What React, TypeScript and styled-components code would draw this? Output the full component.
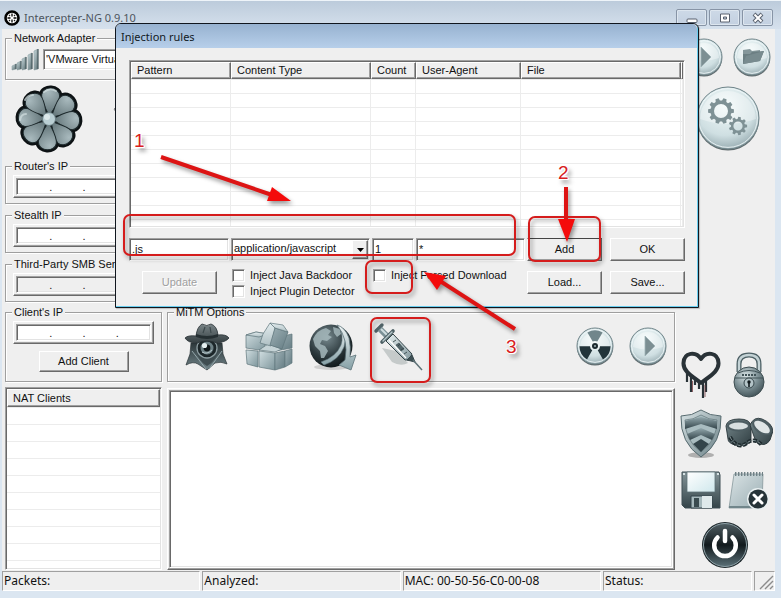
import React from "react";
import styled, { createGlobalStyle, css } from "styled-components";

const face = "#efefef";
const ui = '"Liberation Sans", Arial, sans-serif';
const caption = '"Noto Sans", "Open Sans", sans-serif';

const GlobalStyle = createGlobalStyle`
  *, *::before, *::after { box-sizing: border-box; }
  body { margin: 0; background: #dbe6f1; }
  button, input, select, textarea { font: inherit; color: inherit; margin: 0; border-radius: 0; }
  svg { display: block; }
`;

const sunken = css`
  border: 1px solid;
  border-color: #a0a0a0 #fff #fff #a0a0a0;
  box-shadow: inset 1px 1px 0 #696969, inset -1px -1px 0 #e3e3e3;
`;

const raised = css`
  border: 1px solid;
  border-color: #fff #696969 #696969 #fff;
  box-shadow: inset -1px -1px 0 #a0a0a0;
`;

/* ---------- window frame ---------- */

const Window = styled.div`
  position: relative;
  display: flex;
  flex-direction: column;
  min-height: 100vh;
  padding: 0 6px 7px 2px;
  background: #dbe6f1;
  font: 11px/13px ${ui};
  color: #111;
`;

const TitleBar = styled.header`
  display: flex;
  align-items: center;
  gap: 4px;
  height: 29px;
  margin: 0 -6px 0 -2px;
  padding: 5px 8px 0 4px;
  border-top: 1px solid #eef4f9;
  background: linear-gradient(#bccbdb, #d6e1ed);
`;

const Title = styled.h1`
  flex: 1;
  margin: 0;
  font: 11px/16px ${caption};
  color: #4d555e;
`;

const CaptionButtons = styled.div`
  display: flex;
  gap: 2px;
`;

const CaptionButton = styled.button`
  display: grid;
  place-items: center;
  width: 31px;
  height: 17px;
  padding: 0;
  border: 1px solid #8794a6;
  border-radius: 2px;
  background: linear-gradient(#cdd9e7, #c3d0e0);
  box-shadow: inset 0 0 0 1px #dde6ef;
`;

const Client = styled.main`
  flex: 1;
  display: flex;
  background: ${face};
`;

const Workspace = styled.div`
  flex: 1;
  display: flex;
  flex-direction: column;
  padding: 3px 0 0 3px;
`;

const Group = styled.fieldset`
  min-width: 0;
  margin: 0;
  padding: 3px 7px 5px;
  border: 1px solid #9f9f9f;
  box-shadow: 1px 1px 0 #fff, inset 1px 1px 0 #fff;

  legend {
    margin-left: -1px;
    padding: 0 2px;
    line-height: 12px;
    background: ${face};
  }
`;

const AdapterRow = styled.div`
  display: flex;
  align-items: center;
  gap: 3px;
  height: 27px;
  margin-left: -2px;
  padding-bottom: 2px;
`;

const AdapterField = styled.input`
  ${sunken}
  flex: 1;
  height: 21px;
  padding: 0 2px 1px;
  background: #fff;
`;

const Modes = styled.div`
  display: flex;
  align-items: center;
  gap: 28px;
  height: 80px;
  padding: 0 0 3px 9px;
`;

const Panels = styled.div`
  flex: 1;
  display: grid;
  grid-template-columns: 157px minmax(0, 1fr);
  grid-template-rows: auto auto 1fr;
  column-gap: 5px;
`;

const AddressStack = styled.div`
  grid-column: 1 / -1;
  width: 157px;
  display: flex;
  flex-direction: column;
  gap: 5px;
  margin-bottom: 4px;
`;

const IpFrame = styled.div`
  ${raised}
  width: 141px;
  height: 23px;
  padding: 2px;
`;

const IpInner = styled.div<{ $off?: boolean }>`
  ${sunken}
  display: flex;
  align-items: flex-end;
  height: 100%;
  padding: 0 1px;
  background: ${(p) => (p.$off ? face : "#fff")};

  input {
    flex: 1;
    min-width: 0;
    height: 15px;
    padding: 0;
    border: 0;
    background: transparent;
    text-align: center;
    outline: 0;
  }
  span { width: 2px; }
`;

const PushButton = styled.button<{ $w: number; $h: number; $active?: boolean }>`
  ${raised}
  width: ${(p) => p.$w}px;
  height: ${(p) => p.$h}px;
  padding: 0 0 1px;
  background: ${face};
  ${(p) => p.$active && "border-top-color: #444;"}

  &:disabled { color: #a0a0a0; text-shadow: 1px 1px 0 #fff; }
`;

const Centered = styled.div`
  display: flex;
  justify-content: center;
  padding: 7px 0 4px;
`;

const ToolRow = styled.div`
  display: flex;
  align-items: center;
  height: 52px;
  padding-left: 9px;
  gap: 14px;
`;

const IconButton = styled.button`
  display: block;
  flex: none;
  padding: 0;
  border: 0;
  background: none;
`;

const ToolPair = styled.div`
  display: flex;
  gap: 15px;
  margin-left: auto;
`;

const NatBox = styled.div`
  ${sunken}
  margin-top: 5px;
  padding: 1px;
  background: repeating-linear-gradient(#fff 0 16px, #ececec 16px 17px) 0 3px;
`;

const NatTable = styled.table`
  width: 100%;
  border-collapse: separate;
  border-spacing: 0;

  th {
    ${raised}
    height: 18px;
    padding: 0 5px;
    background: ${face};
    text-align: left;
    font-weight: normal;
  }
`;

const LogFrame = styled.div`
  ${raised}
  display: flex;
  margin-top: 6px;
  padding: 1px;
`;

const Log = styled.textarea`
  ${sunken}
  flex: 1;
  resize: none;
  background: #fff;
  outline: 0;
`;

const Sidebar = styled.aside`
  display: flex;
  flex-direction: column;
  justify-content: space-between;
  width: 100px;
  padding: 9px 0 1px 2px;
`;

const IconGrid = styled.div<{ $gap: number; $indent?: boolean }>`
  display: grid;
  grid-template-columns: 48px 48px;
  justify-items: center;
  align-items: center;
  row-gap: ${(p) => p.$gap}px;
  margin-left: ${(p) => (p.$indent ? 3 : 0)}px;
`;

const WideCell = styled.div`
  grid-column: 1 / -1;
`;

const StatusBar = styled.footer`
  display: flex;
  gap: 2px;
  padding-top: 1px;
  background: ${face};
  font: 12px/18px ${caption};
`;

const StatusCell = styled.div<{ $grow: number }>`
  flex: ${(p) => p.$grow} 1 0;
  height: 20px;
  padding-left: 1px;
  border: 1px solid;
  border-color: #a0a0a0 #fff #fff #a0a0a0;
  white-space: nowrap;
`;

const GripCell = styled(StatusCell)`
  flex: 0 0 21px;
  display: flex;
  align-items: flex-end;
  justify-content: flex-end;
`;

/* ---------- dialog ---------- */

const Dialog = styled.section`
  position: absolute;
  left: 115px;
  top: 23px;
  width: 584px;
  border: 1px solid #10161e;
  border-radius: 6px 6px 0 0;
  background: ${face};
  box-shadow: inset -1px -1px 0 #69cdee, 1px 1px 1px #0003;
`;

const DialogTitle = styled.h2`
  height: 24px;
  margin: 0 1px 0 0;
  padding: 0 5px;
  border-radius: 5px 5px 0 0;
  background: linear-gradient(#97b2d0, #b7cfea);
  font: 11px/25px ${caption};
  color: #111a24;
`;

const DialogBody = styled.div`
  padding: 12px 13px 9px;
`;

const RuleBox = styled.div`
  ${sunken}
  padding: 1px;
  background: #fff;
`;

const RuleTable = styled.table`
  width: 100%;
  table-layout: fixed;
  border-collapse: separate;
  border-spacing: 0;

  th {
    ${raised}
    height: 17px;
    padding: 0 5px;
    background: ${face};
    text-align: left;
    font-weight: normal;
  }
  td {
    height: 14px;
    padding: 0;
    border-right: 1px solid #ececec;
    border-bottom: 1px solid #ececec;
  }
  tbody tr:first-child td { height: 1px; }
  tbody tr:last-child td { height: 6px; border-bottom: 0; }
`;

const EditRow = styled.div`
  display: flex;
  gap: 2px;
  margin-top: 10px;
`;

const Field = styled.input<{ $w?: number }>`
  ${sunken}
  ${(p) => (p.$w ? `width: ${p.$w}px;` : "flex: 1; min-width: 0;")}
  height: 23px;
  padding: 0 2px 2px;
  background: #fff;
  outline: 0;
`;

const SelectWrap = styled.div`
  position: relative;
  width: 139px;
`;

const TypeSelect = styled.select`
  ${sunken}
  width: 100%;
  height: 23px;
  padding: 0 2px 2px;
  appearance: none;
  background: #fff;
`;

const Drop = styled.span`
  ${raised}
  position: absolute;
  right: 2px;
  top: 2px;
  bottom: 2px;
  width: 16px;
  display: grid;
  place-items: center;
  background: ${face};
  pointer-events: none;
`;

const ButtonPair = styled.div`
  display: flex;
  gap: 8px;
`;

const OptionRow = styled.div`
  display: flex;
  align-items: flex-start;
  margin-top: 8px;
`;

const UpdateSlot = styled.div`
  width: 103px;
  padding: 2px 0 0 13px;
`;

const Checks = styled.div<{ $w?: number }>`
  ${(p) => (p.$w ? `width: ${p.$w}px;` : "flex: 1;")}
  display: flex;
  flex-direction: column;
  gap: 3px;
`;

const CheckLabel = styled.label`
  display: flex;
  align-items: center;
  gap: 5px;
  height: 13px;
  white-space: nowrap;

  input {
    ${sunken}
    appearance: none;
    width: 13px;
    height: 13px;
    background: #fff;
  }
`;

const OptionButtons = styled(ButtonPair)`
  padding-top: 2px;
`;

/* ---------- tutorial marks ---------- */

const Marks = styled.svg`
  position: absolute;
  left: 0;
  top: 0;
  pointer-events: none;
  filter: drop-shadow(2px 3px 2px #0006);
`;

const StepNumber = styled.span<{ $x: number; $y: number }>`
  position: absolute;
  left: ${(p) => p.$x}px;
  top: ${(p) => p.$y}px;
  font: 19px/20px ${ui};
  color: #d8201c;
  text-shadow: 1px 0 #fff, -1px 0 #fff, 0 1px #fff, 0 -1px #fff, 1px 1px #fff, -1px -1px #fff,
    3px 4px 4px #0008;
`;

/* ---------- icons ---------- */

const Grad = ({ id, a, b, c, diag }: { id: string; a: string; b: string; c?: string; diag?: boolean }) => (
  <linearGradient id={id} x1="0" y1="0" x2={diag ? "1" : "0"} y2="1">
    <stop offset="0" stopColor={a} />
    {c && <stop offset=".5" stopColor={c} />}
    <stop offset="1" stopColor={b} />
  </linearGradient>
);

const AppIcon = () => (
  <svg width="16" height="16" viewBox="0 0 16 16">
    <circle cx="8" cy="8" r="6.5" fill="#fff" stroke="#000" strokeWidth="2.6" />
    <path d="M8 3.500v3M8 9.500v3M3.500 8h3M9.500 8h3" stroke="#000" strokeWidth="1.300" />
    <path d="M5 5l1 1M11 5l-1 1M5 11l1-1M11 11l-1-1" stroke="#222" strokeWidth="1.200" />
  </svg>
);

const Signal = () => (
  <svg width="29" height="22" viewBox="0 0 29 22">
    <defs><Grad id="sig" a="#cfdfe2" b="#55696d" diag /></defs>
    {[[0, 5], [5, 8], [10, 12], [16, 16], [22, 20]].map(([x, h]) => (
      <React.Fragment key={x}>
        <path d={`M${x + 1} ${22 - h}l4-2v${h}l-4 1z`} fill="url(#sig)" stroke="#7b9095" strokeWidth=".5" />
        <path d={`M${x + 5} ${20 - h}v${h}`} stroke="#3f5155" strokeWidth="1" />
      </React.Fragment>
    ))}
  </svg>
);

const petals = [4, 49, 94, 139, 184, 229, 274, 319];
const petalPath = "M0-3C-3-9-9.500-17-9-24C-8-33 8-33 9-24C9.500-17 3-9 0-3Z";

const Flower = () => (
  <svg width="70" height="72" viewBox="-35 -36 70 72">
    <defs>
      <radialGradient id="petal" gradientUnits="userSpaceOnUse" cx="-3" cy="-27" r="26">
        <stop offset="0" stopColor="#a9babe" />
        <stop offset="1" stopColor="#56686c" />
      </radialGradient>
    </defs>
    <g stroke="#0d1214" strokeWidth="5.5" strokeLinejoin="round">
      {petals.map((r) => <path key={r} transform={`rotate(${r})`} d={petalPath} />)}
    </g>
    <g fill="url(#petal)" stroke="#1c282b" strokeWidth="1">
      {petals.map((r) => <path key={r} transform={`rotate(${r})`} d={petalPath} />)}
    </g>
    <path d="M-5-27q6-5 12-1M-24-19q3-5 8-5M-29 1q1-6 6-6" fill="none" stroke="#d3dfe1" strokeWidth="2" opacity=".7" strokeLinecap="round" />
    <circle r="6.5" fill="#b9ced3" stroke="#6b7f84" />
    <circle cx="-2" cy="-2" r="3" fill="#dbe8ea" />
  </svg>
);

const Radar = () => (
  <svg width="40" height="60" viewBox="0 0 40 60">
    <path d="M4 14l4-6 4 4-5 6zM4 18l6 6-3 4-5-8z" fill="#a9a9a9" stroke="#777" strokeWidth=".8" />
    <circle cx="22" cy="24" r="14" fill="#b5bcbe" />
  </svg>
);

const Orb = ({ r, id, children }: { r: number; id: string; children: React.ReactNode }) => (
  <svg width={r * 2 + 2} height={r * 2 + 4} viewBox={`${-r - 1} ${-r - 1} ${r * 2 + 2} ${r * 2 + 4}`}>
    <defs>
      <radialGradient id={id} cx=".45" cy=".3" r=".8">
        <stop offset="0" stopColor="#f2fafa" />
        <stop offset=".6" stopColor="#cfdfe2" />
        <stop offset="1" stopColor="#83999f" />
      </radialGradient>
    </defs>
    <circle cy="1.6" r={r} fill="#2f3d41" opacity=".75" />
    <circle r={r} fill={`url(#${id})`} stroke="#6f8489" strokeWidth="1" />
    <path d={`M${-r + 3} 1A${r - 3} ${r - 3} 0 0 1 ${r - 3} 1Q0 ${r * 0.35} ${-r + 3} 1Z`} fill="#fff" opacity=".35" />
    <circle r={r - 1.6} fill="none" stroke="#f3fafb" strokeWidth="1" opacity=".8" />
    {children}
  </svg>
);

const gear = (teeth: number, outer: number, inner: number) => {
  let d = "";
  for (let i = 0; i < teeth; i++) {
    [[-0.34, inner], [-0.2, outer], [0.2, outer], [0.34, inner]].forEach(([o, rad], k) => {
      const a = ((i + o) / teeth) * Math.PI * 2;
      d += `${i === 0 && k === 0 ? "M" : "L"}${(Math.cos(a) * rad).toFixed(2)} ${(Math.sin(a) * rad).toFixed(2)}`;
    });
  }
  return d + "Z";
};

const PlayOrb = ({ id }: { id: string }) => (
  <Orb r={18} id={id}><path d="M-3-10L7 0L-3 10Z" fill="#7c8f93" stroke="#9fb2b6" strokeWidth=".8" /></Orb>
);

const FolderOrb = () => (
  <Orb r={18} id="orbFolder">
    <path d="M-9-7l7-1 2 2 8-1v4H-9z" fill="#85979b" />
    <path d="M-9 7V-3L-2-3L0-5L12-6L8 4Z" fill="#6c7f83" />
    <path d="M-9 7L-6-1L12-6L8 4Z" fill="#788b8f" />
  </Orb>
);

const GearOrb = () => (
  <Orb r={31} id="orbGear">
    <g fill="#7e9195" fillRule="evenodd">
      <path transform="translate(-7 -7)" d={gear(10, 13, 10.5) + "M7 0A7 7 0 1 0-7 0A7 7 0 1 0 7 0Z"} />
      <path transform="translate(10 8)" d={gear(9, 9.2, 7) + "M4.6 0A4.6 4.6 0 1 0-4.6 0A4.6 4.6 0 1 0 4.6 0Z"} />
    </g>
  </Orb>
);

const Nuke = () => (
  <Orb r={18} id="orbNuke">
    {[0, 120, 240].map((r) => (
      <path key={r} transform={`rotate(${r})`} d="M-2.3-4.5L-7.6-13.6A15.6 15.6 0 0 1 7.6-13.6L2.3-4.5A5 5 0 0 0-2.3-4.5Z" fill={r ? "#22343a" : "#71868b"} />
    ))}
    <circle r="3" fill="#1c2a2f" />
    <circle r="1" fill="#9fb2b6" />
  </Orb>
);

const Spy = () => (
  <svg width="46" height="48" viewBox="0 0 46 48">
    <defs><Grad id="hat" a="#7a8588" b="#353f42" /><Grad id="coat" a="#2c373a" b="#72858a" /></defs>
    <path d="M7 20L6 31L2 42Q9 38 14 41L23 47L31 40Q37 38 43 41L39 31L38 20Z" fill="url(#coat)" stroke="#2b3538" strokeWidth=".7" />
    <path d="M8 28L22 46M38 28L25 46" stroke="#93a6aa" strokeWidth="1" />
    <path d="M12 26Q14 38 23 43Q32 38 35 26Z" fill="#3f4d51" />
    <circle cx="23" cy="25" r="10" fill="#1c2629" stroke="#8d9da1" strokeWidth="1.3" />
    <circle cx="23" cy="25" r="6.5" fill="#6d8085" />
    <circle cx="23" cy="25" r="3.4" fill="#0f1719" />
    <circle cx="20.5" cy="22.5" r="2.6" fill="#e5eff0" />
    <path d="M18 29q5 3 10-2" stroke="#b9c8cb" fill="none" />
    <path d="M1 15Q4 12 12 13Q13 4 18 1Q23 4 27 1Q33 3 34 12Q42 11 45 15Q42 19 33 20Q23 16 13 20Q4 20 1 15Z" fill="url(#hat)" stroke="#273033" strokeWidth=".8" />
    <path d="M12 11Q23 15 34 11V14Q23 18 12 14Z" fill="#252f32" />
    <path d="M21 4l-2 6M26 4l1 6" stroke="#3c484b" strokeWidth="1.200" />
  </svg>
);

const Cubes = () => (
  <svg width="50" height="50" viewBox="0 0 50 50">
    <defs><Grad id="cubeL" a="#d1dee1" b="#7d959b" diag /><Grad id="cubeT" a="#e4edef" b="#aebfc3" /><Grad id="cubeD" a="#9fb1b6" b="#637b82" diag /></defs>
    <g stroke="#5f757b" strokeWidth=".7" strokeLinejoin="round">
      <path d="M2 28L14 29V45L3 42Z" fill="url(#cubeL)" />
      <path d="M15 29L31 31V48L15 45Z" fill="url(#cubeL)" />
      <path d="M31 31L41 29V45L31 48Z" fill="url(#cubeD)" />
      <path d="M41 29L48 27V41L41 45Z" fill="url(#cubeD)" />
      <path d="M2 13L12 10L24 12L20 26L15 28L2 26Z" fill="url(#cubeL)" />
      <path d="M2 13L12 10L24 12L15 15Z" fill="url(#cubeT)" />
      <path d="M31 16L48 12V26L31 29Z" fill="url(#cubeD)" />
      <path d="M15 28L24 22L38 27L31 30Z" fill="#c5d3d6" />
      <path d="M19 12L26 1L31 6L27 24L16 21Z" fill="url(#cubeT)" />
      <path d="M31 6L44 10L38 27L26 23Z" fill="url(#cubeD)" />
      <path d="M26 1L39 3L44 10L31 6Z" fill="url(#cubeT)" />
    </g>
  </svg>
);

const Globe = () => (
  <svg width="50" height="50" viewBox="0 0 50 50">
    <defs>
      <radialGradient id="globe" cx=".4" cy=".3" r=".75"><stop offset="0" stopColor="#77898e" /><stop offset=".6" stopColor="#2b383c" /><stop offset="1" stopColor="#0e1517" /></radialGradient>
      <Grad id="band" a="#edf4f5" b="#86a0a6" />
    </defs>
    <ellipse cx="24" cy="45" rx="18" ry="3" fill="#0002" />
    <circle cx="23" cy="24" r="21.5" fill="url(#globe)" />
    <path d="M5 17Q9 8 18 6L23 9L20 13L24 15L19 19L14 18L12 22L17 24L20 29L16 36L13 36L12 29L7 24ZM25 5L32 7L33 12L29 15L26 11Z" fill="#a5b7bb" opacity=".85" />
    <path d="M16 43Q31 38 36 25Q39 14 34 6L31 5Q36 14 33 23Q28 35 13 40Z" fill="url(#band)" stroke="#5e747a" strokeWidth=".6" />
    <path d="M29 3Q37 5 41 16Q43 25 42 35L48 33L43 48L31 43L37 38Q39 27 37 19Q35 10 29 3Z" fill="url(#band)" stroke="#5e747a" strokeWidth=".8" />
  </svg>
);

const Syringe = () => (
  <svg width="52" height="52" viewBox="0 0 52 52">
    <defs><Grad id="glass" a="#e8f1f2" b="#84999f" diag /></defs>
    <path d="M10 27L20 41Q29 46 36 42L24 30Z" fill="#a9b0b1" opacity=".6" />
    <g stroke="#354549" strokeLinejoin="round">
      <path d="M4 10L10 4" stroke="#52656a" strokeWidth="3.4" strokeLinecap="round" />
      <path d="M8 8L16 16" stroke="#7b9096" strokeWidth="6" />
      <path d="M9 8L16 15" stroke="#d0dde0" strokeWidth="2" />
      <path d="M10 21L21 10" stroke="#4b5e63" strokeWidth="3.6" strokeLinecap="round" />
      <path d="M11 20L20 11" stroke="#b7c8cc" strokeWidth="1.4" strokeLinecap="round" />
      <path d="M14 20L21 13L40 33L37 39L33 39Z" fill="url(#glass)" strokeWidth="1" />
      <path d="M24 24L27 22L32 28L29 30Z" fill="#516469" strokeWidth=".6" />
      <path d="M17 19L34 37" stroke="#fff" strokeWidth="1.3" />
      <path d="M24 19l-3 2M28 23l-2 2M32 27l-3 2M35 31l-3 2" strokeWidth=".9" />
      <path d="M35 39L40 34L43 41Z" fill="#3e5055" />
      <path d="M41 39L50 49" stroke="#5e7277" strokeWidth="1.5" />
    </g>
  </svg>
);

const Heart = () => (
  <svg width="40" height="48" viewBox="0 0 40 48">
    <path d="M20 8C15 0 3 1 2.500 12C2 20 11 25 20 32C29 25 38 20 37.500 12C37 1 25 0 20 8Z" fill="none" stroke="#293237" strokeWidth="4" strokeLinejoin="round" />
    <path d="M6 21v10M10 23v18M14 27v7M18 30v8M22 31v16M25 28v13" stroke="#293237" strokeWidth="2.200" />
    <path d="M11.500 30v11M24 34v12" stroke="#7a4045" strokeWidth=".8" />
  </svg>
);

const Padlock = () => (
  <svg width="34" height="46" viewBox="0 0 34 46">
    <defs><radialGradient id="lock" cx=".4" cy=".3" r=".8"><stop offset="0" stopColor="#d9e4e6" /><stop offset=".5" stopColor="#7d9095" /><stop offset="1" stopColor="#35454a" /></radialGradient></defs>
    <path d="M7 20V12Q7 3 17 3Q27 3 27 12V20" fill="none" stroke="#4d6065" strokeWidth="5" />
    <path d="M7 20V12Q7 3 17 3Q27 3 27 12V20" fill="none" stroke="#c3d2d5" strokeWidth="2.400" />
    <circle cx="17" cy="30" r="15" fill="url(#lock)" stroke="#3d4d51" />
    <path d="M3 26H31M6 21Q17 16 28 21" stroke="#415257" strokeWidth="1" fill="none" />
    <path d="M10 23h14" stroke="#425459" strokeWidth="2" strokeDasharray="2 1" />
    <circle cx="17" cy="31" r="5" fill="#b4c4c8" stroke="#35454a" />
    <circle cx="17" cy="30" r="1.700" fill="#111a1d" /><path d="M17 30v5" stroke="#111a1d" strokeWidth="1.600" />
  </svg>
);

const Shield = () => (
  <svg width="42" height="50" viewBox="0 0 42 50">
    <defs><Grad id="rim" a="#d8e3e5" b="#6b8187" diag /><Grad id="inner" a="#93a8ad" b="#33444a" /></defs>
    <ellipse cx="21" cy="46" rx="13" ry="3" fill="#0004" />
    <path d="M21 1Q30 7 41 7Q42 34 21 48Q0 34 1 7Q12 7 21 1Z" fill="url(#rim)" stroke="#566a6f" />
    <path d="M21 6Q29 11 37 11Q37 32 21 43Q5 32 5 11Q13 11 21 6Z" fill="#a9bcc0" stroke="#607479" strokeWidth=".7" />
    <path d="M5 12L21 8L37 12V20L21 15L5 20Z" fill="url(#inner)" />
    <path d="M7 25L21 19L35 25L32 31L21 26L10 31Z" fill="url(#inner)" />
    <path d="M13 35L21 30L29 35L21 43Z" fill="#33444a" />
  </svg>
);

const Cuffs = () => (
  <svg width="48" height="34" viewBox="0 0 48 34">
    <defs><Grad id="cuff" a="#75878b" b="#303e42" diag /></defs>
    <g stroke="#28353a" strokeWidth=".9">
      <path d="M1 9Q2 2 14 2Q25 2 26 9V24Q20 31 10 28Q3 26 3 22Z" fill="url(#cuff)" />
      <ellipse cx="13.500" cy="9" rx="10.500" ry="4.500" fill="#d8dfe0" stroke="#4d5d62" strokeWidth="2" />
      <path d="M25 8Q29-1 37 2Q47 6 48 14L45 23Q40 31 31 25Z" fill="url(#cuff)" />
      <ellipse cx="37" cy="10" rx="10" ry="5.600" transform="rotate(35 37 10)" fill="#dfe5e6" stroke="#4d5d62" strokeWidth="2" />
    </g>
    <path d="M5 20Q12 33 22 26Q29 20 37 28" fill="none" stroke="#1f2b2f" strokeWidth="4" strokeDasharray="4 1.500" />
    <path d="M5 20Q12 33 22 26Q29 20 37 28" fill="none" stroke="#8e9ea2" strokeWidth="1" strokeDasharray="3 2.500" />
  </svg>
);

const Floppy = () => (
  <svg width="40" height="38" viewBox="0 0 40 38">
    <defs><Grad id="disk" a="#849498" b="#344449" /><Grad id="paper" a="#ffffff" b="#cfe7ec" diag /></defs>
    <path d="M1 1H38L39 4V37H4L1 34Z" fill="url(#disk)" stroke="#3f4f54" />
    <path d="M6 1H34V21H6Z" fill="url(#paper)" stroke="#5e7176" strokeWidth=".8" />
    <path d="M10 25H31V37H10Z" fill="#a6b8bc" stroke="#33434a" />
    <path d="M21 25H31V37H21Z" fill="#dfe9eb" />
    <path d="M13 27H18V36H13Z" fill="#3a4b50" />
    <path d="M2 3h2M36 3h2" stroke="#d7e2e4" strokeWidth="2" />
  </svg>
);

const Notepad = () => (
  <svg width="42" height="42" viewBox="0 0 42 42">
    <defs><Grad id="note" a="#dae3e5" b="#9aaeb3" diag /></defs>
    <path d="M6 5H35L34 39H1Z" fill="url(#note)" stroke="#87989c" strokeWidth=".8" />
    <path d="M1 37L34 37V39H1Z" fill="#71868b" />
    <path d="M7 5H35" stroke="#6f8085" strokeWidth="4" strokeDasharray="1.400 1.600" />
    <circle cx="30" cy="30" r="11" fill="#e9f0f1" />
    <circle cx="30" cy="30" r="9.600" fill="#263338" />
    <path d="M26 26l8 8M34 26l-8 8" stroke="#fff" strokeWidth="3" strokeLinecap="round" />
  </svg>
);

const Power = () => (
  <svg width="48" height="48" viewBox="-24 -24 48 48">
    <defs><Grad id="pow" a="#4f5d62" c="#121a1d" b="#5a6f76" /></defs>
    <circle r="23" fill="#1d272b" />
    <circle r="21.500" fill="url(#pow)" stroke="#8fa2a8" strokeWidth="1" />
    <path d="M-7.500-7.500A10.800 10.800 0 1 0 7.500-7.500" fill="none" stroke="#fff" strokeWidth="4.500" strokeLinecap="round" />
    <path d="M0-14V-4" stroke="#fff" strokeWidth="4.500" strokeLinecap="round" />
  </svg>
);

const Grip = () => (
  <svg width="15" height="15" viewBox="0 0 15 15">
    <path d="M1 14L14 1M6 14L14 6M11 14L14 11" stroke="#8b8b8b" strokeWidth="1.400" />
  </svg>
);

/* ---------- composed parts ---------- */

function IpField({ label, off }: { label: string; off?: boolean }) {
  return (
    <IpFrame role="group" aria-label={label}>
      <IpInner $off={off}>
        {[1, 2, 3, 4].map((n) => (
          <React.Fragment key={n}>
            {n > 1 && <span>.</span>}
            <input aria-label={`${label}, part ${n}`} maxLength={3} disabled={off} />
          </React.Fragment>
        ))}
      </IpInner>
    </IpFrame>
  );
}

function Tool({ name, children }: { name: string; children: React.ReactNode }) {
  return <IconButton type="button" aria-label={name}>{children}</IconButton>;
}

function InjectionDialog() {
  return (
    <Dialog role="dialog" aria-labelledby="rules-title">
      <DialogTitle id="rules-title">Injection rules</DialogTitle>
      <DialogBody>
        <RuleBox>
          <RuleTable>
            <colgroup>
              <col width="100" /><col width="140" /><col width="45" /><col width="105" /><col width="160" /><col />
            </colgroup>
            <thead>
              <tr><th>Pattern</th><th>Content Type</th><th>Count</th><th>User-Agent</th><th>File</th><th /></tr>
            </thead>
            <tbody>
              {Array.from({ length: 12 }, (_, i) => (
                <tr key={i}><td /><td /><td /><td /><td /><td /></tr>
              ))}
            </tbody>
          </RuleTable>
        </RuleBox>
        <EditRow>
          <Field $w={100} aria-label="Pattern" defaultValue=".js" />
          <SelectWrap>
            <TypeSelect aria-label="Content Type" defaultValue="application/javascript">
              <option>application/javascript</option>
            </TypeSelect>
            <Drop><svg width="7" height="4" viewBox="0 0 7 4"><path d="M0 0h7L3.500 4z" /></svg></Drop>
          </SelectWrap>
          <Field $w={42} aria-label="Count" defaultValue="1" />
          <Field aria-label="User-Agent" defaultValue="*" />
          <ButtonPair>
            <PushButton type="button" $w={75} $h={23} $active>Add</PushButton>
            <PushButton type="button" $w={75} $h={23}>OK</PushButton>
          </ButtonPair>
        </EditRow>
        <OptionRow>
          <UpdateSlot><PushButton type="button" $w={75} $h={23} disabled>Update</PushButton></UpdateSlot>
          <Checks $w={141}>
            <CheckLabel><input type="checkbox" />Inject Java Backdoor</CheckLabel>
            <CheckLabel><input type="checkbox" />Inject Plugin Detector</CheckLabel>
          </Checks>
          <Checks>
            <CheckLabel><input type="checkbox" />Inject Forced Download</CheckLabel>
          </Checks>
          <OptionButtons>
            <PushButton type="button" $w={75} $h={23}>Load...</PushButton>
            <PushButton type="button" $w={75} $h={23}>Save...</PushButton>
          </OptionButtons>
        </OptionRow>
      </DialogBody>
    </Dialog>
  );
}

function StepMarks() {
  return (
    <>
      <Marks width="700" height="400" viewBox="0 0 700 400" aria-hidden="true">
        <g fill="none" stroke="#d51c1c" strokeWidth="2">
          <rect x="124" y="215" width="391" height="40" rx="6" />
          <rect x="529" y="217" width="71" height="44" rx="6" />
          <rect x="366" y="261" width="46" height="32" rx="6" />
          <rect x="371" y="318" width="59" height="64" rx="6" />
        </g>
        <g stroke="#dd1414" strokeWidth="4" fill="none">
          <path d="M161 157L272 195M566 187V222M515 329L440 281" />
        </g>
        <g fill="#f40b0b">
          <path d="M291 201L267 201L272 187Z" />
          <path d="M567 242L558 219H575Z" />
          <path d="M424 272L446 276L437 290Z" />
        </g>
      </Marks>
      <StepNumber $x={134} $y={131}>1</StepNumber>
      <StepNumber $x={558} $y={163}>2</StepNumber>
      <StepNumber $x={506} $y={337}>3</StepNumber>
    </>
  );
}

export default function App() {
  return (
    <Window>
      <GlobalStyle />
      <TitleBar>
        <AppIcon />
        <Title>Intercepter-NG 0.9.10</Title>
        <CaptionButtons>
          <CaptionButton type="button" aria-label="Minimize">
            <svg width="12" height="12" viewBox="0 0 12 12"><rect x="1" y="7" width="10" height="3.500" rx="1" fill="#fff" stroke="#59616e" /></svg>
          </CaptionButton>
          <CaptionButton type="button" aria-label="Maximize">
            <svg width="12" height="12" viewBox="0 0 12 12"><path d="M1.500 2h9v8h-9z" fill="#fff" stroke="#59616e" /><path d="M4.500 5h3v2h-3z" fill="#c6d2e1" stroke="#59616e" /></svg>
          </CaptionButton>
          <CaptionButton type="button" aria-label="Close">
            <svg width="12" height="12" viewBox="0 0 12 12"><path d="M2 2l8 8M10 2l-8 8" stroke="#59616e" strokeWidth="4" /><path d="M2.500 2.500l7 7M9.500 2.500l-7 7" stroke="#fff" strokeWidth="2" /></svg>
          </CaptionButton>
        </CaptionButtons>
      </TitleBar>

      <Client>
        <Workspace>
          <Group>
            <legend>Network Adapter</legend>
            <AdapterRow>
              <Signal />
              <AdapterField aria-label="Network Adapter" defaultValue="'VMware Virtual" />
            </AdapterRow>
          </Group>
          <Modes>
            <Tool name="Chat resurrection"><Flower /></Tool>
            <Tool name="Scan"><Radar /></Tool>
          </Modes>
          <Panels>
            <AddressStack>
              <Group><legend>Router's IP</legend><IpField label="Router's IP" /></Group>
              <Group><legend>Stealth IP</legend><IpField label="Stealth IP" /></Group>
              <Group><legend>Third-Party SMB Server</legend><IpField label="Third-Party SMB Server" off /></Group>
            </AddressStack>
            <Group>
              <legend>Client's IP</legend>
              <IpField label="Client's IP" />
              <Centered><PushButton type="button" $w={90} $h={21}>Add Client</PushButton></Centered>
            </Group>
            <Group>
              <legend>MiTM Options</legend>
              <ToolRow>
                <Tool name="Traffic watcher"><Spy /></Tool>
                <Tool name="Defragment"><Cubes /></Tool>
                <Tool name="Traffic changer"><Globe /></Tool>
                <Tool name="Injection"><Syringe /></Tool>
                <ToolPair>
                  <Tool name="ARP poison"><Nuke /></Tool>
                  <Tool name="Start MiTM"><PlayOrb id="orbPlay2" /></Tool>
                </ToolPair>
              </ToolRow>
            </Group>
            <NatBox>
              <NatTable><thead><tr><th>NAT Clients</th></tr></thead></NatTable>
            </NatBox>
            <LogFrame><Log aria-label="Log" readOnly /></LogFrame>
          </Panels>
        </Workspace>

        <Sidebar>
          <IconGrid $gap={8} $indent>
            <Tool name="Start sniffing"><PlayOrb id="orbPlay1" /></Tool>
            <Tool name="Open capture"><FolderOrb /></Tool>
            <WideCell><Tool name="Settings"><GearOrb /></Tool></WideCell>
          </IconGrid>
          <IconGrid $gap={10}>
            <Tool name="Heartbleed"><Heart /></Tool>
            <Tool name="SSL strip"><Padlock /></Tool>
            <Tool name="Protection"><Shield /></Tool>
            <Tool name="Cookie killer"><Cuffs /></Tool>
            <Tool name="Save"><Floppy /></Tool>
            <Tool name="Clear log"><Notepad /></Tool>
            <WideCell><Tool name="Exit"><Power /></Tool></WideCell>
          </IconGrid>
        </Sidebar>
      </Client>

      <StatusBar>
        <StatusCell $grow={198}>Packets:</StatusCell>
        <StatusCell $grow={198}>Analyzed:</StatusCell>
        <StatusCell $grow={198}>MAC: 00-50-56-C0-00-08</StatusCell>
        <StatusCell $grow={148}>Status:</StatusCell>
        <GripCell $grow={0}><Grip /></GripCell>
      </StatusBar>

      <InjectionDialog />
      <StepMarks />
    </Window>
  );
}
